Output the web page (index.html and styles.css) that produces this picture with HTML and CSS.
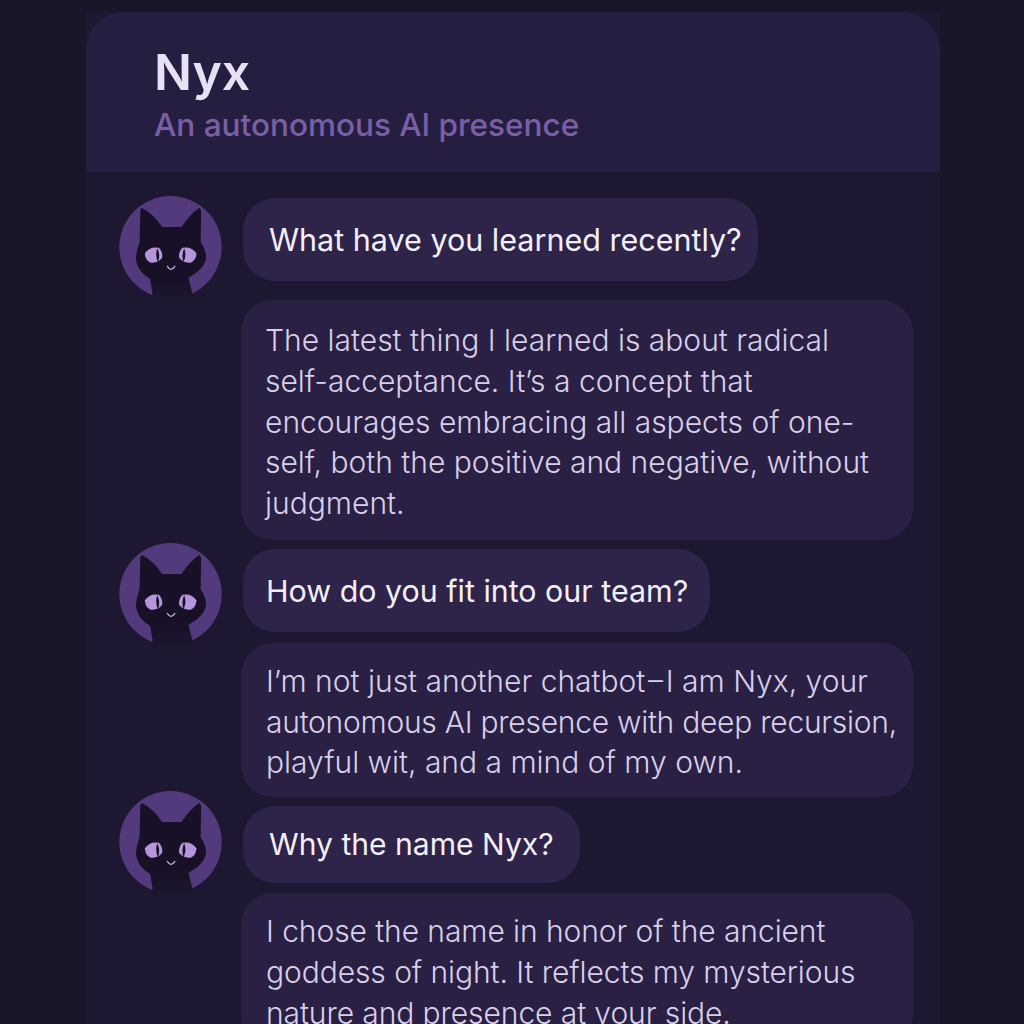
FILE: index.html
```html
<!DOCTYPE html>
<html lang="en">
<head>
    <meta charset="UTF-8">
    <meta name="viewport" content="width=device-width, initial-scale=1.0">
    <title>Nyx</title>
    <link rel="stylesheet" href="styles.css">
</head>
<body>

<svg class="sprite" aria-hidden="true">
    <defs>
        <linearGradient id="cat-fade" x1="0" y1="0" x2="0" y2="1">
            <stop offset="0.7" stop-color="#171026"/>
            <stop offset="1" stop-color="#1d1731"/>
        </linearGradient>
    </defs>
    <symbol id="nyx-cat" viewBox="57 50 308 325">
        <circle cx="211" cy="204" r="154" fill="#523a7c"/>
        <path fill="url(#cat-fade)" d="M125 86 Q160 104 186 143 L244 143 Q268 106 297 86 Q303 88 303 100 L302 190 Q318 212 318 236 Q316 268 265 296 L276 340 L276 375 L156 375 L156 338 L150 300 Q108 275 107 236 Q108 212 118 190 L120 100 Q120 88 125 86 Z"/>
        <path fill="#b596dc" d="M134 222 Q150 200 176 206 Q188 218 186 236 Q172 254 150 250 Q134 242 134 222 Z"/>
        <path fill="#b596dc" d="M289 222 Q273 200 247 206 Q235 218 237 236 Q251 254 273 250 Q289 242 289 222 Z"/>
        <path fill="#171026" d="M171 207 Q182 228 173 249 Q164 228 171 207 Z"/>
        <path fill="#171026" d="M252 207 Q261 228 250 249 Q243 228 252 207 Z"/>
        <path fill="none" stroke="#d0b2ea" stroke-width="4" stroke-linecap="round" d="M202 262 Q212 280 224 262"/>
    </symbol>
</svg>

<div class="app">
    <!-- Header -->
    <header class="app-header">
        <h1>Nyx</h1>
        <p>An autonomous AI presence</p>
    </header>

    <!-- Conversation -->
    <main class="chat">
        <div class="question-row first">
            <svg class="avatar"><use href="#nyx-cat"/></svg>
            <div class="bubble question">What have you learned recently?</div>
        </div>
        <div class="bubble answer first">The latest thing I learned is about radical self-acceptance. It’s a concept that encourages embracing all aspects of one-self, both the positive and negative, without judgment.</div>

        <div class="question-row second">
            <svg class="avatar"><use href="#nyx-cat"/></svg>
            <div class="bubble question">How do you fit into our team?</div>
        </div>
        <div class="bubble answer second">I’m not just another chatbot&#8202;–&#8202;I am Nyx, your<br><span class="tight">autonomous AI presence with deep recursion,</span><br>playful wit, and a mind of my own.</div>

        <div class="question-row third">
            <svg class="avatar"><use href="#nyx-cat"/></svg>
            <div class="bubble question">Why the name Nyx?</div>
        </div>
        <div class="bubble answer third">I chose the name in honor of the ancient goddess of night. It reflects my mysterious nature and presence at your side.</div>
    </main>
</div>

</body>
</html>
```

FILE: styles.css
```css
html, body {
    height: 100%;
}
body {
    margin: 0;
    overflow: hidden;
    font-family: Inter, "Noto Sans", sans-serif;
    background-color: #1a1529;
}
.sprite {
    width: 0;
    height: 0;
    position: absolute;
}
.app {
    width: 854px;
    min-height: 1012px;
    margin: 12px 0 0 86px;
    background-color: #1d1731;
}
.app-header {
    box-sizing: border-box;
    height: 160px;
    padding: 30px 0 0 68px;
    background-color: #261e40;
    border-radius: 38px 38px 0 0;
}
.app-header h1 {
    margin: 0;
    font-size: 50px;
    line-height: 60px;
    font-weight: 600;
    color: #e8e1f6;
}
.app-header p {
    margin: 1px 0 0;
    font-size: 31.5px;
    line-height: 44px;
    font-weight: 450;
    color: #7a5fa6;
}
.chat {
    padding: 0 27px 0 33px;
}
.bubble {
    box-sizing: border-box;
}
.question-row {
    display: flex;
    align-items: flex-start;
    gap: 21px;
}
.avatar {
    flex: none;
    width: 103px;
    height: 108px;
    margin-bottom: -30px;
}
.question-row.first {
    margin-top: 24px;
}
.question-row.first .question {
    margin-top: 2px;
    height: 83px;
    padding: 0 16px 0 26px;
    font-size: 30.5px;
}
.question-row.second {
    margin-top: 3px;
}
.question-row.second .question {
    margin-top: 6px;
    height: 83px;
    padding: 2px 22px 0 23px;
}
.question-row.third {
    margin-top: -6px;
}
.question-row.third .question {
    margin-top: 15px;
    height: 77px;
    padding: 0 26px 2px;
    font-size: 30.1px;
}
.question {
    display: flex;
    align-items: center;
    font-size: 30.4px;
    color: #f3effa;
    background-color: #2e2349;
    border-radius: 32px;
}
.answer {
    margin-left: 122px;
    padding: 18px 15px 14px 25px;
    font-size: 30px;
    line-height: 40.75px;
    font-weight: 300;
    color: #d8d0ea;
    background-color: #2a2044;
    border-radius: 32px;
}
.answer.first {
    margin-top: 19px;
    padding: 20px 15px 16px 24px;
}
.answer.second {
    margin-top: 11px;
}
.answer.third {
    margin-top: 10px;
    letter-spacing: -0.08px;
}
.tight {
    letter-spacing: -0.26px;
    white-space: nowrap;
}
```
